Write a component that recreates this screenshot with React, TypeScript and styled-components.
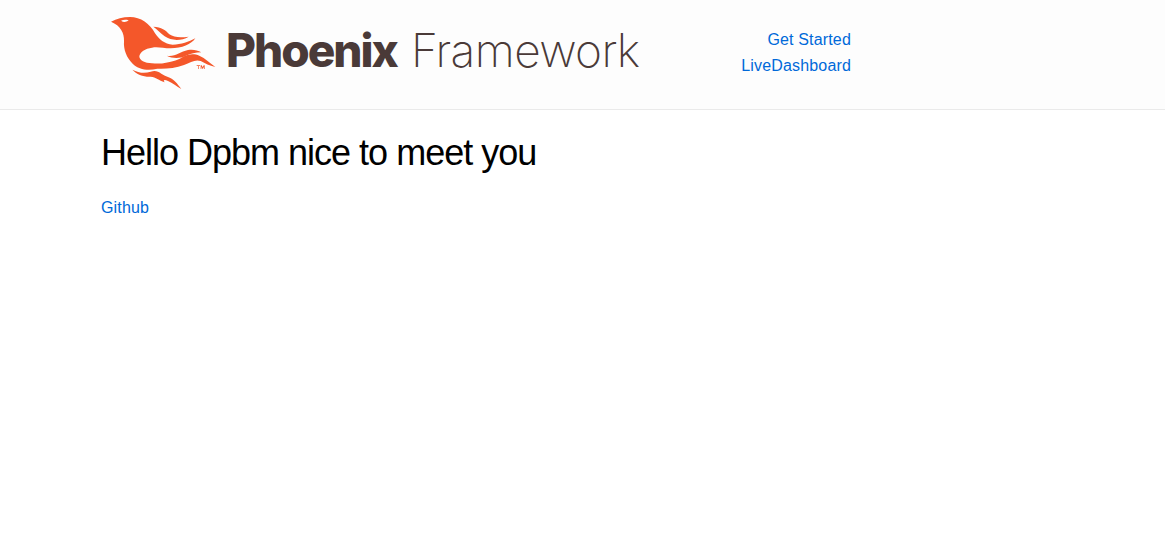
import React from "react";
import styled, { createGlobalStyle } from "styled-components";

const Global = createGlobalStyle`
  html, body { margin: 0; padding: 0; background: #fff; }
  body {
    font-family: "Helvetica Neue", Helvetica, Arial, "Liberation Sans", sans-serif;
    font-size: 16px;
    font-weight: 300;
    letter-spacing: 0.01em;
    line-height: 1.6;
    color: #000;
  }
  ul { list-style: none; margin: 0; padding: 0; }
`;

const Header = styled.header`
  box-sizing: border-box;
  height: 110px;
  background: #fdfdfd;
  border-bottom: 1px solid #eaeaea;
`;

const HeaderRow = styled.section`
  box-sizing: border-box;
  width: 851px;
  padding-left: 110px;
  height: 109px;
  display: flex;
  align-items: flex-start;
  justify-content: space-between;
`;

const Logo = styled.a`
  display: flex;
  align-items: flex-start;
  text-decoration: none;
  color: #4a3a38;
  white-space: nowrap;
  letter-spacing: 0;
`;

const Bird = styled.svg`
  display: block;
  width: 116px;
  height: 95px;
  margin-top: 5px;
  flex: none;
`;

const Wordmark = styled.span`
  display: flex;
  gap: 14px;
  margin-top: 16px;
  font-family: Inter, "Liberation Sans", sans-serif;
  font-size: 46px;
  line-height: 68px;
`;

const Strong = styled.span`
  font-weight: 800;
  letter-spacing: -2px;
`;

const Thin = styled.span`
  font-weight: 250;
  letter-spacing: -0.6px;
`;

const Nav = styled.nav`
  padding-top: 27px;
  text-align: right;
`;

const NavItem = styled.li`
  height: 26px;
  line-height: 26px;
`;

const Link = styled.a`
  color: #0069d9;
  text-decoration: none;
`;

const Main = styled.main`
  padding: 18px 0 0 101px;
`;

const Title = styled.h1`
  margin: 0;
  font-size: 36px;
  font-weight: 300;
  line-height: 50px;
  letter-spacing: -1px;
  color: #000;
`;

const Para = styled.p`
  margin: 17px 0 0;
  line-height: 26px;
`;

export default function App() {
  return (
    <>
      <Global />
      <Header>
        <HeaderRow>
          <Logo href="#">
            <Bird viewBox="30 0 348 285" aria-hidden="true">
              <g fill="#f4572a">
                <path d="M33 50 C50 42 68 36 90 36 C122 36 150 56 165 85 C176 102 194 118 218 119 C244 119 266 110 286 100 C274 118 246 130 212 130 C190 130 172 124 156 128 C136 130 119 142 118 154 C118 166 134 175 156 175 C172 176 186 176 198 173 C218 170 236 166 252 154 C268 146 284 146 298 152 C316 160 330 174 346 186 C328 182 316 176 302 168 C286 162 272 172 252 180 C226 190 196 192 172 191 C144 198 116 194 98 176 C80 158 70 134 72 108 C73 84 62 62 33 50 Z" />
                <path d="M160 65 C184 66 198 76 208 88 C222 98 242 98 266 95 C244 108 214 108 194 94 C182 84 172 74 160 65 Z" />
                <path d="M200 152 C226 156 240 140 264 135 C280 132 292 136 304 142 C286 142 272 146 258 152 C240 161 218 161 200 152 Z" />
                <path d="M97 194 C116 204 134 206 152 200 C164 196 174 198 184 206 C198 216 214 216 226 230 C232 236 238 244 244 252 C230 244 218 234 204 228 C194 224 188 224 194 232 C176 226 168 216 152 215 C130 216 110 208 97 194 Z" />
                <path d="M290 181 h10 v2 h-4 v9 h-2 v-9 h-4 Z M302 181 h3 l3 6 l3 -6 h3 v11 h-2 v-7 l-3 6 h-2 l-3 -6 v7 h-2 Z" />
              </g>
              <path d="M63 47 C70 44 78 44 86 46 C78 52 70 52 63 47 Z" fill="#fdfdfd" />
            </Bird>
            <Wordmark>
              <Strong>Phoenix</Strong>
              <Thin>Framework</Thin>
            </Wordmark>
          </Logo>
          <Nav>
            <ul>
              <NavItem><Link href="#">Get Started</Link></NavItem>
              <NavItem><Link href="#">LiveDashboard</Link></NavItem>
            </ul>
          </Nav>
        </HeaderRow>
      </Header>
      <Main>
        <Title>Hello Dpbm nice to meet you</Title>
        <Para><Link href="#">Github</Link></Para>
      </Main>
    </>
  );
}
